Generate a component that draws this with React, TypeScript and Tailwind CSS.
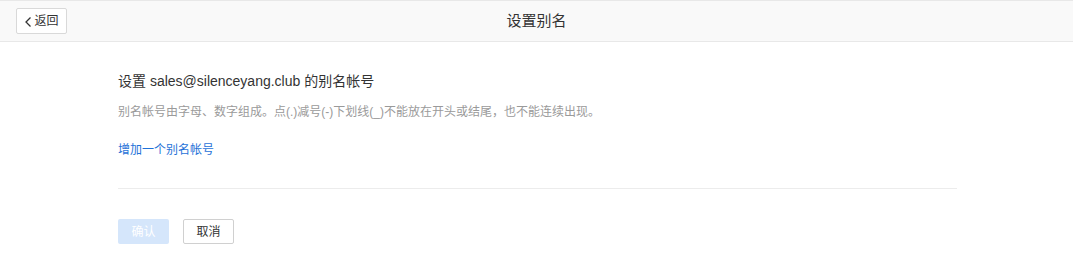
import React from "react";

export default function App() {
  return (
    <div
      className="w-[1073px] h-[263px] bg-white text-[#333]"
      style={{ fontFamily: '"Liberation Sans", "Noto Sans CJK SC", sans-serif' }}
    >
      <div className="relative h-[42px] bg-[#f9f9f9] border-t border-b border-[#e8e8e8] flex items-center justify-center">
        <button className="absolute left-[16px] top-[7px] h-[26px] w-[51px] bg-white border border-[#d9d9d9] rounded-[2px] flex items-center justify-center gap-[1px] text-[12px] text-[#333]">
          <svg width="9" height="12" viewBox="0 0 9 12" className="mt-[1px]">
            <path d="M6.5 1.5 L2 6 L6.5 10.5" fill="none" stroke="#333" strokeWidth="1.3" />
          </svg>
          <span>返回</span>
        </button>
        <div className="text-[15px] text-[#333]">设置别名</div>
      </div>
      <div className="ml-[118px] w-[839px]">
        <div className="pt-[29px] text-[14px] leading-[20px] text-[#333]">设置 sales@silenceyang.club 的别名帐号</div>
        <div className="mt-[12px] text-[12px] leading-[18px] text-[#9a9a9a]">
          别名帐号由字母、数字组成。点(.)减号(-)下划线(_)不能放在开头或结尾，也不能连续出现。
        </div>
        <div className="mt-[20px] text-[12px] leading-[18px] text-[#1f72d8]">增加一个别名帐号</div>
        <div className="mt-[29px] border-t border-[#ececec]" />
        <div className="mt-[30px] flex gap-[14px]">
          <button className="w-[51px] h-[25px] rounded-[2px] bg-[#d5e6fb] text-white text-[12px]">确认</button>
          <button className="w-[51px] h-[25px] rounded-[2px] bg-white border border-[#d0d0d0] text-[#333] text-[12px]">取消</button>
        </div>
      </div>
    </div>
  );
}
